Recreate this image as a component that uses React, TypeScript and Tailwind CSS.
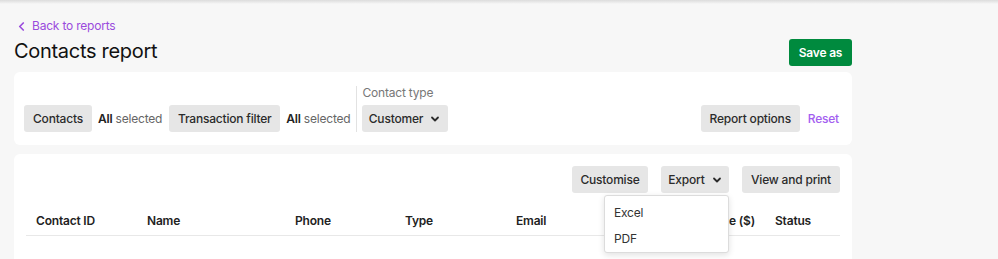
import React from "react";

const font = { fontFamily: "Inter, 'Noto Sans', sans-serif" };

const Chevron = ({ className = "" }: { className?: string }) => (
  <svg viewBox="0 0 10 10" className={className} fill="none">
    <path d="M2 3.5 5 6.5 8 3.5" stroke="currentColor" strokeWidth="1.8" strokeLinecap="round" strokeLinejoin="round" />
  </svg>
);

const Btn = ({ children, className = "" }: { children: React.ReactNode; className?: string }) => (
  <button className={`h-[27px] rounded-[3px] bg-[#e6e6e6] text-[12px] font-medium text-[#2b2b2b] flex items-center justify-center gap-[7px] whitespace-nowrap ${className}`}>
    {children}
  </button>
);

const Selected = ({ className = "" }: { className?: string }) => (
  <span className={`text-[12px] whitespace-nowrap mb-[4px] ${className}`}>
    <span className="font-semibold text-[#222]">All</span>{" "}
    <span className="text-[#666]">selected</span>
  </span>
);

const columns = [
  { label: "Contact ID", w: "w-[111px]" },
  { label: "Name", w: "w-[148px]" },
  { label: "Phone", w: "w-[110px]" },
  { label: "Type", w: "w-[111px]" },
  { label: "Email", w: "w-[110px]" },
];

export default function App() {
  return (
    <div className="min-h-[259px] h-[259px] overflow-hidden bg-[#f7f7f7] text-[#1c1c1c] tracking-[-0.2px]" style={font}>
      <div className="h-[4px] bg-gradient-to-b from-[#dcdcdc] to-[#f7f7f7]" />
      <div className="w-[838px] ml-[14px]">
        <a className="mt-[13px] flex items-center gap-[7px] pl-[4px] h-[18px] text-[12px] text-[#9a4bdd]">
          <svg viewBox="0 0 8 10" className="w-[7px] h-[9px]" fill="none">
            <path d="M6 1 2 5 6 9" stroke="currentColor" strokeWidth="1.9" strokeLinecap="round" strokeLinejoin="round" />
          </svg>
          Back to reports
        </a>
        <div className="flex justify-between items-start">
          <h1 className="text-[20px] leading-[28px] mt-[2px] font-normal text-[#111] tracking-[-0.3px]">Contacts report</h1>
          <button className="mt-[4px] h-[27px] w-[63px] rounded-[3px] bg-[#008a3e] text-white text-[12px] font-semibold">
            Save as
          </button>
        </div>

        <div className="mt-[6px] bg-white rounded-[6px] px-[10px] pt-[13px] pb-[13px] flex items-end">
          <Btn className="w-[68px]">Contacts</Btn>
          <Selected className="ml-[6px] mr-[7px]" />
          <Btn className="w-[111px]">Transaction filter</Btn>
          <Selected className="ml-[6px]" />
          <div className="w-px h-[46px] bg-[#e2e2e2] ml-[5px] mr-[5px]" />
          <div className="flex flex-col">
            <span className="text-[12px] leading-[16px] text-[#777] mb-[4px] ml-[1px]">Contact type</span>
            <Btn className="w-[86px]">
              Customer
              <Chevron className="w-[10px] h-[10px]" />
            </Btn>
          </div>
          <div className="ml-auto flex items-center gap-[8px] mr-[3px]">
            <Btn className="w-[99px]">Report options</Btn>
            <span className="text-[12px] font-medium text-[#a35ef0]">Reset</span>
          </div>
        </div>

        <div className="mt-[9px] bg-white rounded-[6px] px-[12px] pt-[12px] h-[120px]">
          <div className="flex justify-end">
            <Btn className="w-[76px]">Customise</Btn>
            <div className="relative ml-[13px]">
              <Btn className="w-[68px] bg-[#cdcdcd]">
                Export
                <Chevron className="w-[10px] h-[10px]" />
              </Btn>
              <div className="absolute right-0 top-full mt-[2px] w-[125px] h-[58px] bg-white border border-[#dcdcdc] rounded-[3px] shadow-[0_2px_6px_rgba(0,0,0,0.12)] pt-[4px] z-10">
                <div className="h-[26px] px-[9px] flex items-center text-[12px] text-[#333]">Excel</div>
                <div className="h-[26px] px-[9px] flex items-center text-[12px] text-[#333]">PDF</div>
              </div>
            </div>
            <Btn className="w-[98px] ml-[13px]">View and print</Btn>
          </div>
          <div className="mt-[12px] flex border-b border-[#e8e8e8] h-[31px] items-center text-[12px] font-semibold text-[#222] pt-[2px]">
            {columns.map((c) => (
              <div key={c.label} className={`${c.w} px-[10px]`}>
                {c.label}
              </div>
            ))}
            <div className="w-[149px] px-[10px] text-right">Balance ($)</div>
            <div className="flex-1 px-[10px]">Status</div>
          </div>
        </div>
      </div>
    </div>
  );
}
